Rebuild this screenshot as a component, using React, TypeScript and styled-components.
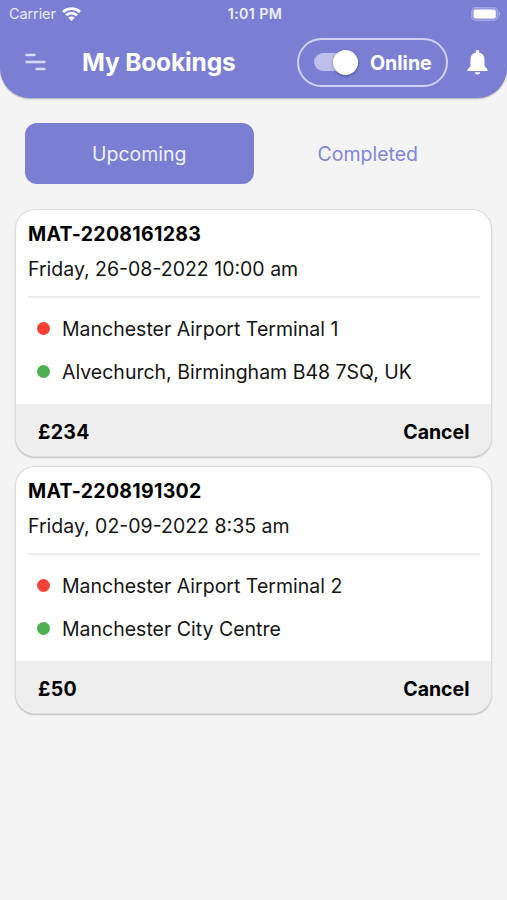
import React from "react";
import styled, { createGlobalStyle } from "styled-components";

const violet = "#7b7fd4";

const GlobalStyle = createGlobalStyle`
  * { box-sizing: border-box; }
  body {
    margin: 0;
    background: #f4f4f4;
    font-family: Inter, "Liberation Sans", sans-serif;
    color: #000;
  }
  button { font: inherit; color: inherit; border: 0; background: none; padding: 0; }
`;

const Screen = styled.main`
  min-height: 900px;
  background: #f4f4f4;
`;

const Header = styled.header`
  height: 98px;
  background: ${violet};
  border-radius: 0 0 30px 30px;
  box-shadow: 0 1px 1.5px rgba(0, 0, 0, 0.28);
  color: #fff;
`;

const StatusBar = styled.div`
  height: 27px;
  padding: 0 6px 0 9px;
  display: grid;
  grid-template-columns: 1fr auto 1fr;
  align-items: center;
`;

const Carrier = styled.div`
  display: flex;
  align-items: center;
  gap: 6px;
  font-size: 14.5px;
  line-height: 27px;
  letter-spacing: -0.1px;
  color: #e9eafd;
`;

const Clock = styled.div`
  font-size: 14.2px;
  font-weight: 600;
  letter-spacing: 0.4px;
  line-height: 27px;
  color: #eef0ff;
`;

const Battery = styled.svg`
  justify-self: end;
  display: block;
`;

const NavBar = styled.div`
  height: 71px;
  padding: 0 18px 1px 25px;
  display: flex;
  align-items: center;
`;

const MenuIcon = styled.svg`
  display: block;
`;

const Title = styled.h1`
  margin: 0 0 0 36px;
  width: 215px;
  font-size: 24.5px;
  font-weight: 700;
  letter-spacing: -0.15px;
  line-height: 30px;
  white-space: nowrap;
`;

const StatusToggle = styled.button`
  width: 151px;
  height: 49px;
  border: 2px solid #cfd2f5;
  border-radius: 25px;
  display: flex;
  align-items: center;
  padding-left: 15px;
  margin-right: 19px;
`;

const Track = styled.span`
  width: 44px;
  height: 18px;
  border-radius: 9px;
  background: #bdbfea;
  display: flex;
  align-items: center;
  justify-content: flex-end;
`;

const Knob = styled.span`
  flex: none;
  width: 25px;
  height: 25px;
  border-radius: 50%;
  background: #fff;
  box-shadow: 0 1px 3px rgba(0, 0, 0, 0.35);
`;

const ToggleLabel = styled.span`
  margin-left: 12px;
  padding-top: 2px;
  font-size: 19.6px;
  font-weight: 700;
  line-height: 24px;
`;

const Tabs = styled.nav`
  padding: 25px 25px 0;
  display: grid;
  grid-template-columns: 1fr 1fr;
`;

const Tab = styled.button<{ $active?: boolean }>`
  height: 61px;
  border-radius: 12px;
  background: ${(p) => (p.$active ? violet : "transparent")};
  color: ${(p) => (p.$active ? "#eef0ff" : "#8286d8")};
  font-size: 19.5px;
  line-height: 24px;
`;

const BookingList = styled.section`
  padding: 25px 15px 0;
  display: flex;
  flex-direction: column;
  gap: 9px;
`;

const Card = styled.article`
  height: 248px;
  border-radius: 20px;
  background: #fff;
  border: 1px solid #dcdcdc;
  box-shadow: 0 1px 1.5px rgba(0, 0, 0, 0.22);
  overflow: hidden;
  display: flex;
  flex-direction: column;
`;

const CardHead = styled.div`
  height: 88px;
  margin: 0 11px 0 12px;
  border-bottom: 2px solid #eeeeee;
`;

const Reference = styled.h2`
  margin: 11px 0 0;
  font-size: 19.5px;
  font-weight: 700;
  letter-spacing: 0.28px;
  line-height: 26px;
`;

const When = styled.p`
  margin: 10px 0 0;
  font-size: 19.5px;
  line-height: 25px;
  color: #151515;
`;

const Stops = styled.ul`
  list-style: none;
  margin: 0;
  padding: 10px 0 0 21px;
  flex: 1;
`;

const Stop = styled.li<{ $color: string }>`
  height: 43px;
  display: flex;
  align-items: center;
  gap: 12px;
  font-size: 19.5px;
  line-height: 25px;
  color: #151515;
  white-space: nowrap;

  &::before {
    content: "";
    width: 13px;
    height: 13px;
    margin-bottom: 3px;
    border-radius: 50%;
    background: ${(p) => p.$color};
  }
`;

const CardFoot = styled.footer`
  height: 52px;
  padding: 3px 21.5px 0 22px;
  background: #eee;
  display: flex;
  align-items: center;
  justify-content: space-between;
  font-size: 19.5px;
  font-weight: 700;
  line-height: 24px;
`;

const Price = styled.span`
  letter-spacing: 0.3px;
`;

const bookings = [
  {
    id: "MAT-2208161283",
    when: "Friday, 26-08-2022 10:00 am",
    from: "Manchester Airport Terminal 1",
    to: "Alvechurch, Birmingham B48 7SQ, UK",
    price: "£234",
  },
  {
    id: "MAT-2208191302",
    when: "Friday, 02-09-2022 8:35 am",
    from: "Manchester Airport Terminal 2",
    to: "Manchester City Centre",
    price: "£50",
  },
];

export default function App() {
  return (
    <>
      <GlobalStyle />
      <Screen>
        <Header>
          <StatusBar>
            <Carrier>
              Carrier
              <svg width="19" height="14" viewBox="0 0 19 14" fill="none" stroke="#fff" strokeWidth="2.7">
                <path d="M1 4.900C5.700.4 13.300.4 18 4.900" />
                <path d="M4 8.200c3.100-2.900 7.900-2.900 11 0" />
                <path d="M9.500 13.900 6.300 10.700c1.800-1.600 4.600-1.600 6.400 0z" fill="#fff" stroke="none" />
              </svg>
            </Carrier>
            <Clock>1:01 PM</Clock>
            <Battery width="30" height="14" viewBox="0 0 30 14">
              <rect x="0.7" y="0.7" width="26" height="12.6" rx="3.8" fill="#8f93dc" stroke="#a3a7e4" strokeWidth="1.2" />
              <rect x="2.6" y="2.6" width="22.2" height="8.8" rx="2" fill="#fff" />
              <path d="M28 5v4c1.700-.6 1.700-3.400 0-4z" fill="#b1b4e9" />
            </Battery>
          </StatusBar>
          <NavBar>
            <MenuIcon width="21" height="18" viewBox="0 0 21 18" fill="none" stroke="#d9dbfa" strokeWidth="2.4" strokeLinecap="round">
              <path d="M1.500 2h8M1.500 9h18M11.500 16h8" />
            </MenuIcon>
            <Title>My Bookings</Title>
            <StatusToggle>
              <Track>
                <Knob />
              </Track>
              <ToggleLabel>Online</ToggleLabel>
            </StatusToggle>
            <svg width="21" height="25" viewBox="0 0 21 25" fill="#fff">
              <path d="M10.500 0c-1 0-1.700.7-1.700 1.700v.8C5.300 3.300 3.500 6 3.500 9.500v6.600L.5 19.400v1.600h20v-1.600l-3-3.300V9.500c0-3.500-1.800-6.200-5.300-7v-.8c0-1-.7-1.700-1.700-1.700zM8 22.200a2.500 2.300 0 0 0 5 0z" />
            </svg>
          </NavBar>
        </Header>
        <Tabs>
          <Tab $active>Upcoming</Tab>
          <Tab>Completed</Tab>
        </Tabs>
        <BookingList>
          {bookings.map((b) => (
            <Card key={b.id}>
              <CardHead>
                <Reference>{b.id}</Reference>
                <When>{b.when}</When>
              </CardHead>
              <Stops>
                <Stop $color="#f44336">{b.from}</Stop>
                <Stop $color="#4caf50">{b.to}</Stop>
              </Stops>
              <CardFoot>
                <Price>{b.price}</Price>
                <button>Cancel</button>
              </CardFoot>
            </Card>
          ))}
        </BookingList>
      </Screen>
    </>
  );
}
